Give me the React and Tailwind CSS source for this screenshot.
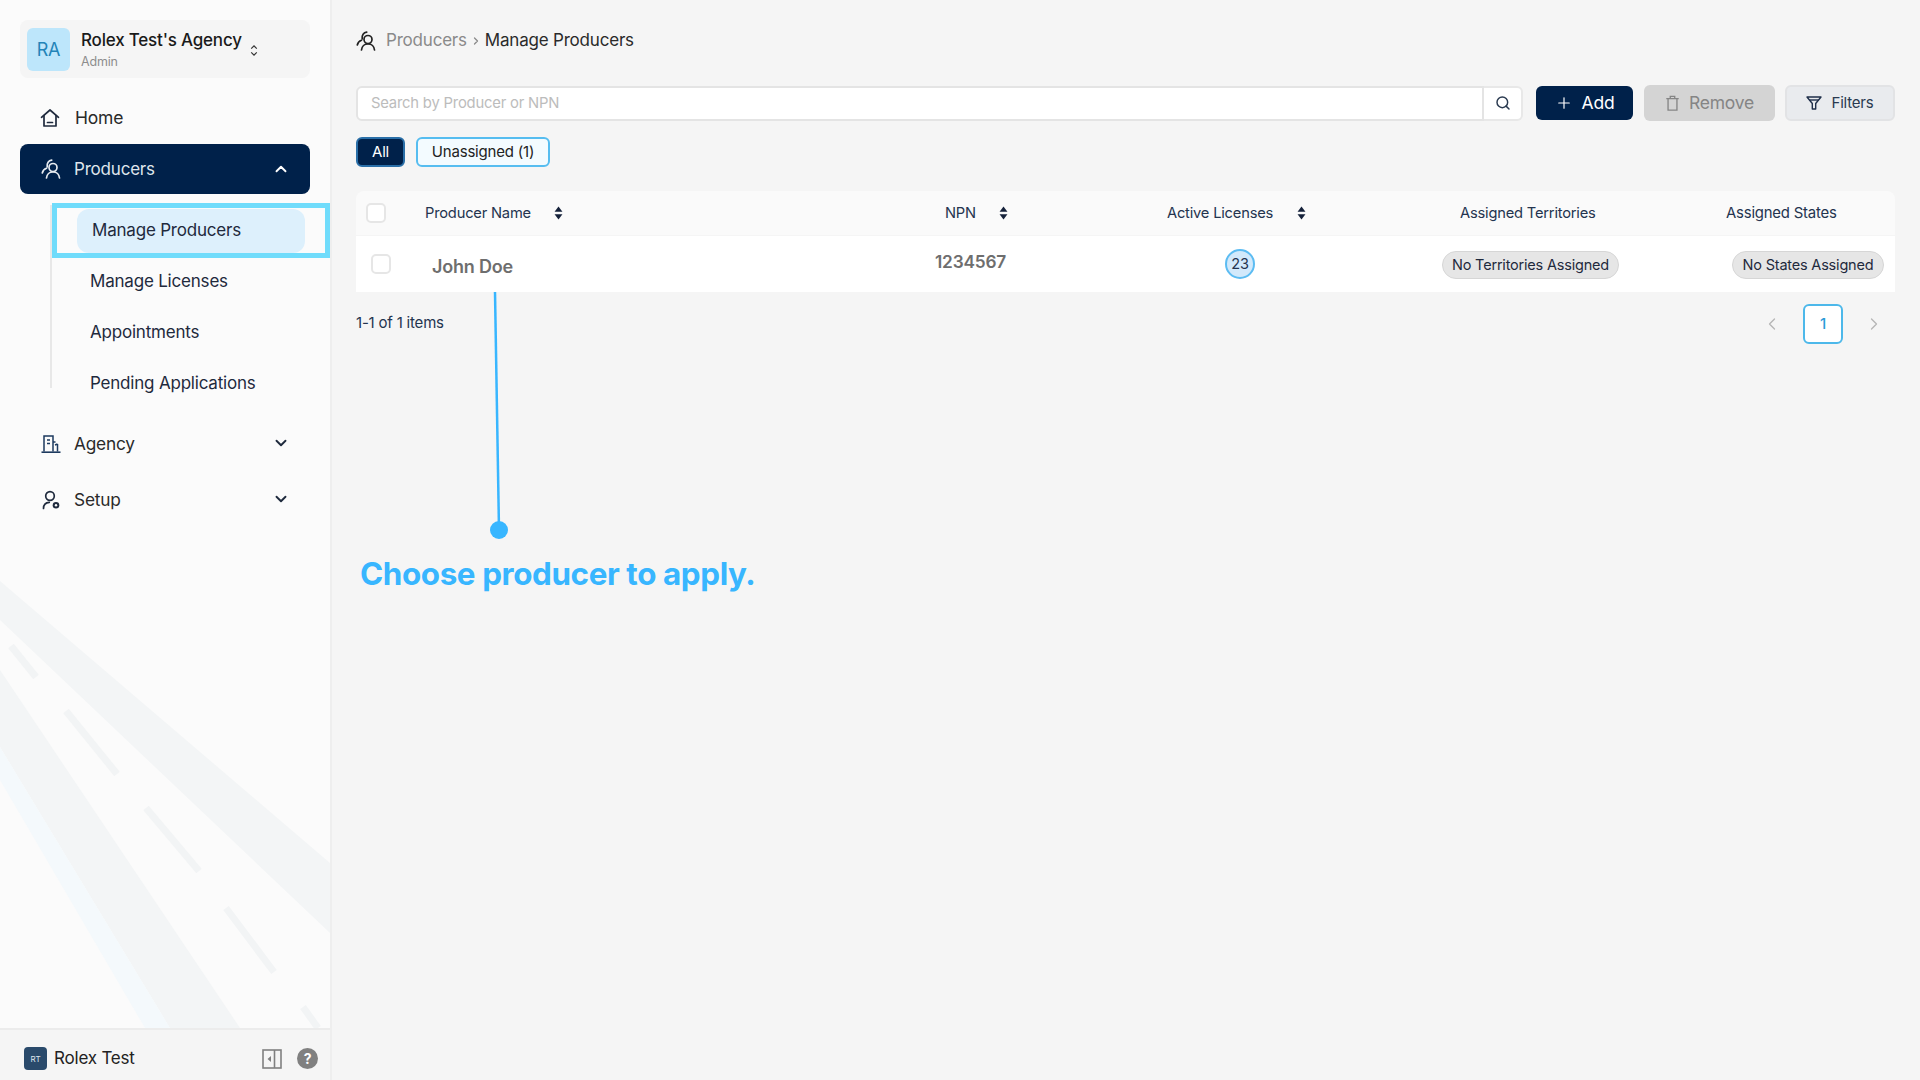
import React from "react";
import { ChevronUp, ChevronDown, ChevronLeft, ChevronRight, Plus, Search } from "lucide-react";

const ProducersIcon = ({ className }) => (
  <svg viewBox="0 0 20 20" fill="none" stroke="currentColor" strokeWidth="1.700" strokeLinecap="round" className={className}>
    <circle cx="12" cy="8.500" r="4" />
    <path d="M5.500 19c.3-3.600 3-6.100 6.500-6.100s6.200 2.500 6.500 6.100" />
    <path d="M6.200 7.800C5.700 4 7.600 1.500 10.700 1.200" />
    <path d="M1.300 14C1.800 11.600 3.300 10 5.500 9.200" />
  </svg>
);

const HomeIcon = ({ className }) => (
  <svg viewBox="0 0 20 20" fill="none" stroke="currentColor" strokeWidth="1.700" strokeLinejoin="round" strokeLinecap="round" className={className}>
    <path d="M1.500 9.300 10 2l8.500 7.300" />
    <path d="M4 7.500V18h12V7.500" />
    <path d="M7.500 14.500h5" />
  </svg>
);

const AgencyIcon = ({ className }) => (
  <svg viewBox="0 0 20 20" fill="none" stroke="currentColor" strokeWidth="1.500" className={className}>
    <path d="M3 17.500V2h9v15.500" />
    <path d="M12 8h2.500M16.500 10v7.500M14 11l2.500-1M6 6h3M6 9.500h3" />
    <path d="M.500 18.200h19" strokeWidth="1.600" />
  </svg>
);

const SetupIcon = ({ className }) => (
  <svg viewBox="0 0 20 20" fill="none" stroke="currentColor" strokeWidth="1.700" strokeLinecap="round" className={className}>
    <circle cx="9" cy="6" r="4.300" />
    <path d="M2.500 18.500c0-3.800 2.400-6 5.800-6.200" />
    <circle cx="15" cy="15.300" r="3.300" fill="currentColor" stroke="none" />
    <circle cx="15" cy="15.300" r="1.200" fill="#fbfbfb" stroke="none" />
  </svg>
);

const SortIcon = () => (
  <svg viewBox="0 0 10 16" className="h-[14px] w-[9px] fill-[#15213a]">
    <path d="M5 0.500 9.500 6.500H0.500Z" />
    <path d="M5 15.500 0.500 9.500H9.500Z" />
  </svg>
);

const SubItem = ({ children }) => (
  <div className="flex h-[51px] items-center pl-[40px] text-[#1f2a3d]">{children}</div>
);

const Checkbox = () => (
  <div className="h-5 w-5 rounded-[5px] border-2 border-[#e6e6e6] bg-white" />
);

const Pill = ({ children, className }) => (
  <div className={`flex h-[28px] items-center justify-center rounded-full border border-[#d6d6d6] bg-[#e6e6e6] text-[14.500px] text-[#1f2a3d] ${className}`}>
    {children}
  </div>
);

export default function App() {
  return (
    <div className="flex h-[1080px] w-[1920px] overflow-hidden bg-[#f5f5f5] font-['Inter',sans-serif] text-[17px] tracking-[-0.2px] text-[#1f1f1f]">
      <aside className="relative flex h-full w-[332px] shrink-0 flex-col border-r-2 border-[#eeeeee] bg-[#fbfbfb]">
        <svg className="absolute left-0 top-0 h-[1080px] w-[330px]" viewBox="0 0 330 1080">
          <polygon points="0,581 330,863 330,933 0,620" fill="#f3f5f6" />
          <polygon points="0,670 240,1028 170,1028 0,747" fill="#f3f5f6" />
          <polygon points="0,747 170,1028 145,1028 0,780" fill="#f4f9fc" />
          <g stroke="#f2f4f5" strokeWidth="7">
            <line x1="11" y1="646" x2="36" y2="677" />
            <line x1="66" y1="711" x2="117" y2="774" />
            <line x1="146" y1="808" x2="199" y2="871" />
            <line x1="226" y1="908" x2="274" y2="972" />
            <line x1="303" y1="1007" x2="318" y2="1028" />
          </g>
        </svg>
        <div className="relative flex-1 px-5 pt-5">
          <div className="flex h-[58px] w-[290px] items-center rounded-lg bg-[#f5f5f5] pl-[7px]">
            <div className="flex h-[43px] w-[43px] items-center justify-center rounded-md bg-[#bde6fb] text-[18px] text-[#2384b8]">RA</div>
            <div className="ml-[11px] flex flex-col">
              <span className="text-[17px] font-medium leading-[22px] text-[#1a1a1a]">Rolex Test's Agency</span>
              <span className="mt-[2px] text-[12.500px] leading-[17px] text-[#8d8d8d]">Admin</span>
            </div>
            <svg viewBox="0 0 8 14" fill="none" stroke="#333333" strokeWidth="1.300" className="ml-[8px] mt-[2px] h-[13px] w-[8px]">
              <path d="M1 5 4 2l3 3M1 9l3 3 3-3" />
            </svg>
          </div>
          <div className="mt-[15px] flex h-[50px] items-center pl-[20px]">
            <HomeIcon className="h-[20px] w-[20px] text-[#1f2a3d]" />
            <span className="ml-[15px] pt-[1px] text-[17.500px] text-[#2a2a2a]">Home</span>
          </div>
          <div className="mt-[1px] flex h-[50px] items-center rounded-lg bg-[#00214a] pl-[21px] pr-[20px] text-[#dfe5ec]">
            <ProducersIcon className="h-[20px] w-[20px] text-[#e6ebf0]" />
            <span className="ml-[13px] flex-1 pt-[1px] text-[17px]">Producers</span>
            <ChevronUp size={18} strokeWidth={2.500} className="text-white" />
          </div>
          <div className="relative ml-[30px] mt-[11px] text-[17px]">
            <div className="absolute bottom-[21px] left-0 top-0 w-[2px] bg-[#e8e8e8]" />
            <div className="relative flex h-[51px] items-center">
              <div className="ml-[27px] flex h-[44px] w-[228px] items-center rounded-xl bg-[#ddf0fc] pl-[15px] pt-[1px] text-[#1f2a3d]">Manage Producers</div>
              <div className="absolute -right-[20px] -top-[2px] bottom-[-2px] left-[2px] border-[5px] border-[#70dcfb]" />
            </div>
            <SubItem>Manage Licenses</SubItem>
            <SubItem>Appointments</SubItem>
            <SubItem>Pending Applications</SubItem>
          </div>
          <div className="mt-[7px] flex h-[56px] items-center pl-[21px] pr-[20px]">
            <AgencyIcon className="h-[20px] w-[20px] text-[#1d3a5f]" />
            <span className="ml-[13px] flex-1 text-[17.300px] text-[#2a2a2a]">Agency</span>
            <ChevronDown size={18} strokeWidth={2.500} className="-mt-[3px] text-[#1f2a3d]" />
          </div>
          <div className="flex h-[56px] items-center pl-[21px] pr-[20px]">
            <SetupIcon className="h-[20px] w-[20px] text-[#1f2a3d]" />
            <span className="ml-[13px] flex-1 text-[17.300px] text-[#2a2a2a]">Setup</span>
            <ChevronDown size={18} strokeWidth={2.500} className="-mt-[3px] text-[#1f2a3d]" />
          </div>
        </div>
        <div className="relative flex h-[52px] items-center border-t-2 border-[#ececec] bg-[#f5f5f5] pl-[24px] pt-[7px]">
          <div className="flex h-[23px] w-[23px] items-center justify-center rounded-[4px] bg-[#2a4a6b] text-[8px] text-[#dfe5ec]">RT</div>
          <span className="ml-[7px] flex-1 text-[17px] text-[#222222]">Rolex Test</span>
          <svg viewBox="0 0 20 20" fill="none" className="h-[20px] w-[20px]" stroke="#808080" strokeWidth="1.600">
            <rect x="1" y="1" width="18" height="18" />
            <path d="M12.500 1v18" />
            <path d="M9 7v6L5.500 10Z" fill="#808080" stroke="none" />
          </svg>
          <div className="ml-[15px] mr-[12px] flex h-[21px] w-[21px] items-center justify-center rounded-full bg-[#808080] text-[14px] font-bold text-white">?</div>
        </div>
      </aside>

      <main className="relative flex-1 pl-[24px] pr-[25px] pt-[20px]">
        <div className="flex h-[40px] items-center pt-[1px] text-[17px]">
          <ProducersIcon className="h-[20px] w-[20px] text-[#222222]" />
          <span className="ml-[10px] text-[#8a8a8a]">Producers</span>
          <ChevronRight size={12} strokeWidth={2.500} className="mx-[3px] text-[#8a8a8a]" />
          <span className="text-[#2a2a2a]">Manage Producers</span>
        </div>

        <div className="mt-[25px] flex h-[36px] items-center">
          <div className="flex h-[35px] flex-1 items-center rounded-l-md border-2 border-[#e4e4e4] bg-white pl-[13px] pt-[1px] text-[14.800px] text-[#bcbcbc]">Search by Producer or NPN</div>
          <div className="flex h-[35px] w-[39px] items-center justify-center rounded-r-md border-2 border-l-0 border-[#e8e8e8] bg-white">
            <Search size={16} strokeWidth={2.200} className="text-[#2a3a50]" />
          </div>
          <div className="ml-[13px] flex h-[34px] w-[97px] items-center justify-center gap-[9px] rounded-md bg-[#00214a] text-[17.500px] text-white">
            <Plus size={18} strokeWidth={1.600} />
            <span>Add</span>
          </div>
          <div className="ml-[11px] flex h-[36px] w-[131px] items-center justify-center gap-[9px] rounded-md bg-[#d4d4d4] text-[17.500px] text-[#858585]">
            <svg viewBox="0 0 16 18" fill="none" stroke="#858585" strokeWidth="1.500" className="h-[16px] w-[15px]">
              <path d="M1 4h14M3 4v13h10V4M5.500 4V1.500h5V4" />
            </svg>
            <span>Remove</span>
          </div>
          <div className="ml-[10px] flex h-[36px] w-[110px] items-center justify-center gap-[9px] rounded-md border-2 border-[#e2e3e5] bg-[#e9ebee] text-[15px] text-[#2a3a50]">
            <svg viewBox="0 0 16 16" fill="none" stroke="#1f2f4a" strokeWidth="1.400" strokeLinejoin="round" className="h-[16px] w-[16px]">
              <path d="M1 2h14L9.700 8.500V14H6.300V8.500Z" />
              <path d="M3.500 5h9" />
            </svg>
            <span>Filters</span>
          </div>
        </div>

        <div className="mt-[16px] flex h-[30px] gap-[11px] text-[15px]">
          <div className="flex w-[49px] items-center justify-center rounded-md border-2 border-[#2a6fa8] bg-[#00214a] pt-[1px] text-white">All</div>
          <div className="flex w-[134px] items-center justify-center rounded-md border-2 border-[#56bdf0] bg-[#f3fbff] pt-[1px] text-[#222222]">Unassigned (1)</div>
        </div>

        <div className="mt-[24px] overflow-hidden rounded-t-lg">
          <div className="flex h-[44px] items-center bg-[#fafafa] text-[14.700px] text-[#24344f]">
            <div className="w-[59px] shrink-0 pl-[10px]"><Checkbox /></div>
            <div className="flex w-[485px] shrink-0 items-center gap-[23px] pl-[10px]">Producer Name <SortIcon /></div>
            <div className="flex w-[160px] shrink-0 items-center gap-[23px] pl-[45px]">NPN <SortIcon /></div>
            <div className="flex w-[280px] shrink-0 items-center gap-[24px] pl-[107px]">Active Licenses <SortIcon /></div>
            <div className="w-[340px] shrink-0 pl-[120px]">Assigned Territories</div>
            <div className="flex-1 pl-[46px] text-[14.900px]">Assigned States</div>
          </div>
          <div className="mt-[1px] flex h-[56px] items-center bg-white">
            <div className="w-[59px] shrink-0 pl-[15px]"><Checkbox /></div>
            <div className="w-[485px] shrink-0 pl-[17px] pt-[5px] text-[18px] font-semibold text-[#6e6e6e]">John Doe</div>
            <div className="w-[160px] shrink-0 pb-[5px] pl-[35px] text-[17.300px] font-semibold text-[#6e6e6e]">1234567</div>
            <div className="w-[280px] shrink-0 pl-[165px]">
              <div className="flex h-[30px] w-[30px] items-center justify-center rounded-full border-2 border-[#5cbcf2] bg-[#d2e9fb] text-[14.500px] text-[#24344f]">23</div>
            </div>
            <div className="w-[340px] shrink-0 pl-[102px] pt-[1px]"><Pill className="w-[177px]">No Territories Assigned</Pill></div>
            <div className="flex-1 pl-[52px] pt-[1px]"><Pill className="w-[152px]">No States Assigned</Pill></div>
          </div>
        </div>

        <div className="mt-[12px] flex h-[40px] items-center">
          <span className="-mt-[2px] flex-1 text-[15px] text-[#24344f]">1-1 of 1 items</span>
          <ChevronLeft size={20} strokeWidth={1.500} className="text-[#b5b5b5]" />
          <div className="ml-[21px] flex h-[40px] w-[40px] items-center justify-center rounded-md border-2 border-[#4db8ea] bg-white text-[15px] font-medium text-[#2b9bd8]">1</div>
          <ChevronRight size={20} strokeWidth={1.500} className="ml-[21px] mr-[11px] text-[#b5b5b5]" />
        </div>

        <svg className="pointer-events-none absolute left-0 top-0 h-[1080px] w-[1588px]" viewBox="0 0 1588 1080">
          <line x1="163" y1="292" x2="167" y2="530" stroke="#38b6ff" strokeWidth="2.500" />
          <circle cx="167" cy="530" r="9" fill="#38b6ff" />
        </svg>
        <div className="absolute left-[28px] top-[555px] text-[31.400px] font-bold leading-[38px] tracking-[-0.4px] text-[#38b6ff]">Choose producer to apply.</div>
      </main>
    </div>
  );
}
